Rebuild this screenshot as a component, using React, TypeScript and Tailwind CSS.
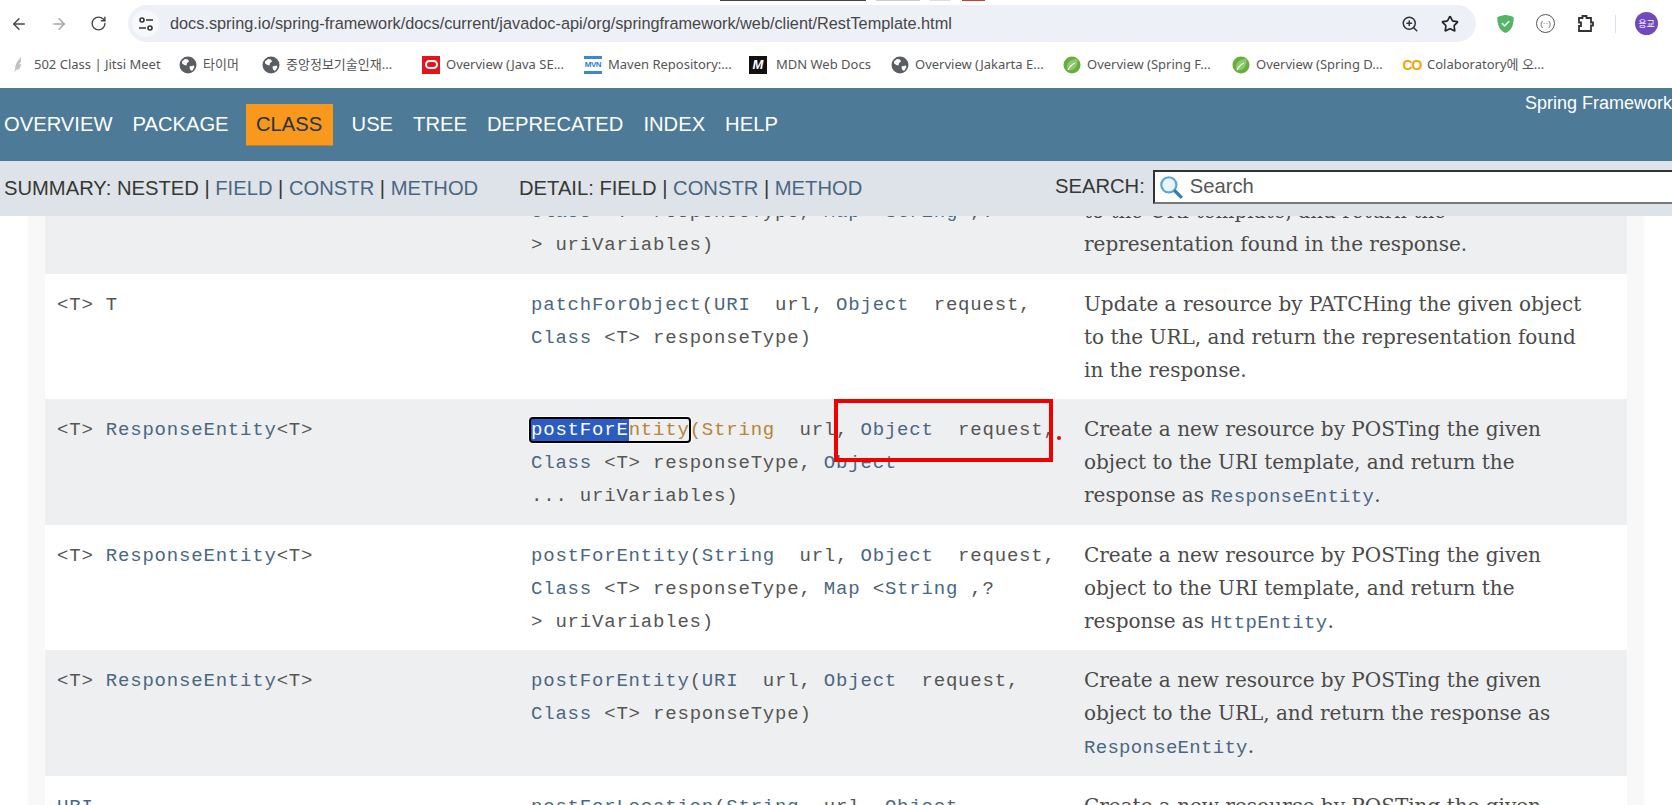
import React from 'react';
import { ArrowLeft, ArrowRight, RotateCw, ZoomIn, Star } from 'lucide-react';

const mono = "font-['Liberation_Mono',monospace] text-[19px] leading-[33px] tracking-[0.8px] text-[#555]";
const serif = "font-['DejaVu_Serif',serif] text-[20px] leading-[33px] text-[#4a4a4a]";
const link = 'text-[#4a6782]';
const code = "font-['Liberation_Mono',monospace] text-[19px] tracking-[0.3px] text-[#4a6782]";

const Leaf = () => (
  <svg viewBox="0 0 18 18" className="h-[18px] w-[18px]">
    <circle cx="9" cy="9" r="8.500" fill="#6aad3d" />
    <path d="M14.500 3C9 3 4 5.500 4 10.500c0 1.500.7 3 1.500 3.500 3.500 1 9.500-1 9-11z" fill="#8cc96a" />
    <path d="M5 14c1.500-3.500 4-5.500 7-7" stroke="#fff" strokeWidth="1.300" fill="none" />
  </svg>
);

const World = () => (
  <svg viewBox="0 0 18 18" className="h-[18px] w-[18px]">
    <circle cx="9" cy="9" r="8.500" fill="#5a5e63" />
    <path d="M3 5.500 6 3l3 .5 1 2-2 1.500-.5 2.500L5.500 9 3 7.500zM10.500 10.500l4-1 1 1.500-2.500 4-2-1.500z" fill="#fff" />
  </svg>
);

const bookmarks: { icon: React.ReactNode; label: string; width: string }[] = [
  {
    icon: <svg viewBox="0 0 18 18" className="h-[18px] w-[18px]"><path d="M11 1C7 5 5 9 5 13l-1 4 2-3c3 0 5-3 5-6l-2 .5 2-2.500z" fill="#c2c2c2" /></svg>,
    label: '502 Class | Jitsi Meet',
    width: 'w-[169px]',
  },
  { icon: <World />, label: '타이머', width: 'w-[83px]' },
  { icon: <World />, label: '중앙정보기술인재...', width: 'w-[160px]' },
  {
    icon: <span className="flex h-[18px] w-[18px] items-center justify-center bg-[#e3141c]"><span className="h-[9px] w-[13px] rounded-[5px] border-[2px] border-white" /></span>,
    label: 'Overview (Java SE...',
    width: 'w-[162px]',
  },
  {
    icon: <span className="flex h-[18px] w-[18px] items-center justify-center overflow-hidden border-y-[3px] border-[#3a87d6] bg-white font-['Liberation_Sans',sans-serif] text-[8px] font-bold leading-none tracking-[-0.5px] text-[#2f7fd0]">MVN</span>,
    label: 'Maven Repository:...',
    width: 'w-[165px]',
  },
  {
    icon: <span className="mr-[3px] flex h-[18px] w-[18px] items-center justify-center bg-[#111] font-['Liberation_Sans',sans-serif] text-[13px] font-bold italic leading-none text-white">M</span>,
    label: 'MDN Web Docs',
    width: 'w-[142px]',
  },
  { icon: <World />, label: 'Overview (Jakarta E...', width: 'w-[172px]' },
  { icon: <Leaf />, label: 'Overview (Spring F...', width: 'w-[169px]' },
  { icon: <Leaf />, label: 'Overview (Spring D...', width: 'w-[171px]' },
  {
    icon: <span className="flex h-[18px] w-[18px] items-center justify-center font-['Liberation_Sans',sans-serif] text-[14px] font-bold leading-none tracking-[-1px] text-[#f5a300]">CO</span>,
    label: 'Colaboratory에 오...',
    width: 'w-[130px]',
  },
];

const navItems = ['OVERVIEW', 'PACKAGE', 'CLASS', 'USE', 'TREE', 'DEPRECATED', 'INDEX', 'HELP'];

type Row = { ret: React.ReactNode; method: React.ReactNode; desc: React.ReactNode };

const RE = <><span>&lt;T&gt; </span><span className={link}>ResponseEntity</span>&lt;T&gt;</>;

const rows: Row[] = [
  {
    ret: <></>,
    method: <><br /><span className={link}>Class</span> &lt;T&gt; responseType, <span className={link}>Map</span> &lt;<span className={link}>String</span> ,?<br />&gt; uriVariables)</>,
    desc: <><br />to the URI template, and return the<br />representation found in the response.</>,
  },
  {
    ret: <>&lt;T&gt; T</>,
    method: <><span className={link}>patchForObject</span>(<span className={link}>URI</span>&nbsp; url, <span className={link}>Object</span>&nbsp; request,<br /><span className={link}>Class</span> &lt;T&gt; responseType)</>,
    desc: <>Update a resource by PATCHing the given object<br />to the URL, and return the representation found<br />in the response.</>,
  },
  {
    ret: RE,
    method: (
      <>
        <span className="relative">
          <span className="absolute -bottom-[2px] -left-[2px] -right-[1px] -top-[2px] rounded-[4px] border-[2px] border-black shadow-[0_0_0_1px_#fff]" />
          <span className="bg-[#2a5cc4] text-white">postForE</span>
          <span className="text-[#b5853a]">ntity</span>
        </span>
        <span className="text-[#b5853a]">(String</span>&nbsp; url, <span className={link}>Object</span>&nbsp; request,<br />
        <span className={link}>Class</span> &lt;T&gt; responseType, <span className={link}>Object</span><br />... uriVariables)
      </>
    ),
    desc: <>Create a new resource by POSTing the given<br />object to the URI template, and return the<br />response as <span className={code}>ResponseEntity</span>.</>,
  },
  {
    ret: RE,
    method: <><span className={link}>postForEntity</span>(<span className={link}>String</span>&nbsp; url, <span className={link}>Object</span>&nbsp; request,<br /><span className={link}>Class</span> &lt;T&gt; responseType, <span className={link}>Map</span> &lt;<span className={link}>String</span> ,?<br />&gt; uriVariables)</>,
    desc: <>Create a new resource by POSTing the given<br />object to the URI template, and return the<br />response as <span className={code}>HttpEntity</span>.</>,
  },
  {
    ret: RE,
    method: <><span className={link}>postForEntity</span>(<span className={link}>URI</span>&nbsp; url, <span className={link}>Object</span>&nbsp; request,<br /><span className={link}>Class</span> &lt;T&gt; responseType)</>,
    desc: <>Create a new resource by POSTing the given<br />object to the URL, and return the response as<br /><span className={code}>ResponseEntity</span>.</>,
  },
  {
    ret: <span className={link}>URI</span>,
    method: <><span className={link}>postForLocation</span>(<span className={link}>String</span>&nbsp; url, <span className={link}>Object</span></>,
    desc: <>Create a new resource by POSTing the given</>,
  },
];

export default function App() {
  return (
    <div className="relative flex h-[805px] w-[1672px] flex-col overflow-hidden bg-white font-['Liberation_Sans',sans-serif]">
      {/* tab strip remnants at the very top */}
      <div className="absolute left-[720px] top-0 flex h-px">
        <span className="w-[146px] bg-[#444]" />
        <span className="ml-[10px] w-[44px] bg-[#ccc]" />
        <span className="ml-[10px] w-[20px] bg-[#ddd]" />
        <span className="ml-[12px] w-[23px] bg-[#d33]" />
      </div>

      {/* browser chrome */}
      <div className="flex h-[47px] items-center">
        <div className="flex w-[128px] items-center pl-[10px] text-[#474747]">
          <ArrowLeft className="h-[18px] w-[18px]" strokeWidth={2} />
          <ArrowRight className="ml-[22px] h-[18px] w-[18px] text-[#a8a8a8]" strokeWidth={2} />
          <RotateCw className="ml-[22px] h-[17px] w-[17px]" strokeWidth={2} />
        </div>
        <div className="flex h-[37px] w-[1348px] items-center rounded-full bg-[#edf0f7] pl-[4px] pr-[17px]">
          <span className="flex h-[27px] w-[27px] items-center justify-center rounded-full bg-[#f7f8fb]">
            <svg viewBox="0 0 16 16" className="h-[16px] w-[16px]" fill="none" stroke="#333" strokeWidth="1.600">
              <circle cx="4" cy="4" r="2" />
              <path d="M8 4h7M1 12h7" />
              <circle cx="12" cy="12" r="2" />
            </svg>
          </span>
          <span className="ml-[11px] flex-1 text-[16.300px] text-[#474747]">docs.spring.io/spring-framework/docs/current/javadoc-api/org/springframework/web/client/RestTemplate.html</span>
          <ZoomIn className="h-[18px] w-[18px] text-[#333]" strokeWidth={2} />
          <Star className="ml-[22px] h-[18px] w-[18px] text-[#222]" strokeWidth={2.200} />
        </div>
        <div className="flex flex-1 items-center pl-[20px]">
          <svg viewBox="0 0 20 22" className="h-[20px] w-[19px]">
            <path d="M10 1c3 0 6 1 9 2.500C19 12 17 18 10 21 3 18 1 12 1 3.500 4 2 7 1 10 1z" fill="#55b567" />
            <path d="m6 10 3 3 5-5" stroke="#e8fff0" strokeWidth="1.800" fill="none" />
          </svg>
          <span className="ml-[21px] flex h-[19px] w-[19px] items-center justify-center rounded-full border-[1.500px] border-[#555] text-[8px] leading-none text-[#555]">(··)</span>
          <svg viewBox="0 0 20 20" className="ml-[21px] h-[20px] w-[20px]" fill="none" stroke="#333" strokeWidth="1.800">
            <path d="M3 4h3.500V2h4v2H15v4.500h2v3h-2V17H3v-5h2V8.500H3z" />
          </svg>
          <span className="ml-[19px] h-[18px] w-px bg-[#d8e0ea]" />
          <span className="ml-[19px] flex h-[23px] w-[23px] items-center justify-center rounded-full bg-[#7048c0] font-['Noto_Sans_CJK_KR',sans-serif] text-[9px] leading-none text-white">용교</span>
        </div>
      </div>
      <div className="flex h-[41px] items-center pb-[6px] pl-[10px] font-['Noto_Sans','Noto_Sans_CJK_KR',sans-serif] text-[13px] text-[#555]">
        {bookmarks.map(b => (
          <div key={b.label} className={`flex shrink-0 items-center gap-[6px] ${b.width}`}>
            {b.icon}
            <span className="whitespace-nowrap">{b.label}</span>
          </div>
        ))}
      </div>

      {/* javadoc header */}
      <header className="relative z-10 flex h-[73px] items-center bg-[#4d7a97] pl-[4px] text-[20.200px] text-white">
        {navItems.map(item =>
          item === 'CLASS' ? (
            <span key={item} className="mr-[19px] flex h-[41px] w-[87px] items-center justify-center bg-[#f8981d] text-[#253441] shadow-[0_1px_0_#b8862f]">{item}</span>
          ) : (
            <span key={item} className={item === 'PACKAGE' ? 'mr-[17px]' : 'mr-[20px] last:mr-0'}>{item}</span>
          )
        )}
        <span className="absolute right-0 top-[2px] w-[147px] overflow-hidden whitespace-nowrap text-[18px]">Spring Framework</span>
      </header>
      <div className="relative z-10 flex h-[55px] items-center bg-[#dee3e9] pl-[4px] text-[20.200px] text-[#353833]">
        <span className="w-[515px] whitespace-nowrap">SUMMARY: NESTED | <span className={link}>FIELD</span> | <span className={link}>CONSTR</span> | <span className={link}>METHOD</span></span>
        <span className="w-[536px] whitespace-nowrap">DETAIL: FIELD | <span className={link}>CONSTR</span> | <span className={link}>METHOD</span></span>
        <div className="mb-[4px] flex flex-1 items-center">
          <span>SEARCH:</span>
          <div className="ml-[8px] flex h-[34px] flex-1 items-center border-[2px] border-r-0 border-[#333] border-b-[#777] bg-white pl-[3px] text-[#555]">
            <svg viewBox="0 0 24 24" className="h-[26px] w-[26px]">
              <circle cx="10" cy="10" r="7" fill="#e8f4fa" stroke="#5aa8d0" strokeWidth="2" />
              <path d="m15 15 7 7" stroke="#2f7fb0" strokeWidth="3" />
            </svg>
            <span className="ml-[6px]">Search</span>
          </div>
        </div>
      </div>

      {/* method table */}
      <main className="flex-1 overflow-hidden">
        <div className="mx-[28px] -mt-[68px] border-x-[17px] border-[#f8f8f9]">
          {rows.map((r, i) => (
            <div key={i} className={`grid h-[125.500px] grid-cols-[474px_553px_1fr] ${i % 2 === 0 ? 'bg-[#eeeff0]' : 'bg-white'}`}>
              <div className={`px-[12px] pt-[15px] ${mono}`}>{r.ret}</div>
              <div className={`px-[12px] pt-[15px] whitespace-nowrap ${mono}`}>{r.method}</div>
              <div className={`px-[12px] pt-[14px] whitespace-nowrap ${serif}`}>{r.desc}</div>
            </div>
          ))}
        </div>
      </main>

      {/* screen annotation */}
      <div className="absolute left-[834px] top-[399px] h-[63px] w-[219px] border-[4px] border-[#f10000]" />
      <div className="absolute left-[1057px] top-[436px] h-[4px] w-[4px] rounded-full bg-[#f10000]" />
    </div>
  );
}
